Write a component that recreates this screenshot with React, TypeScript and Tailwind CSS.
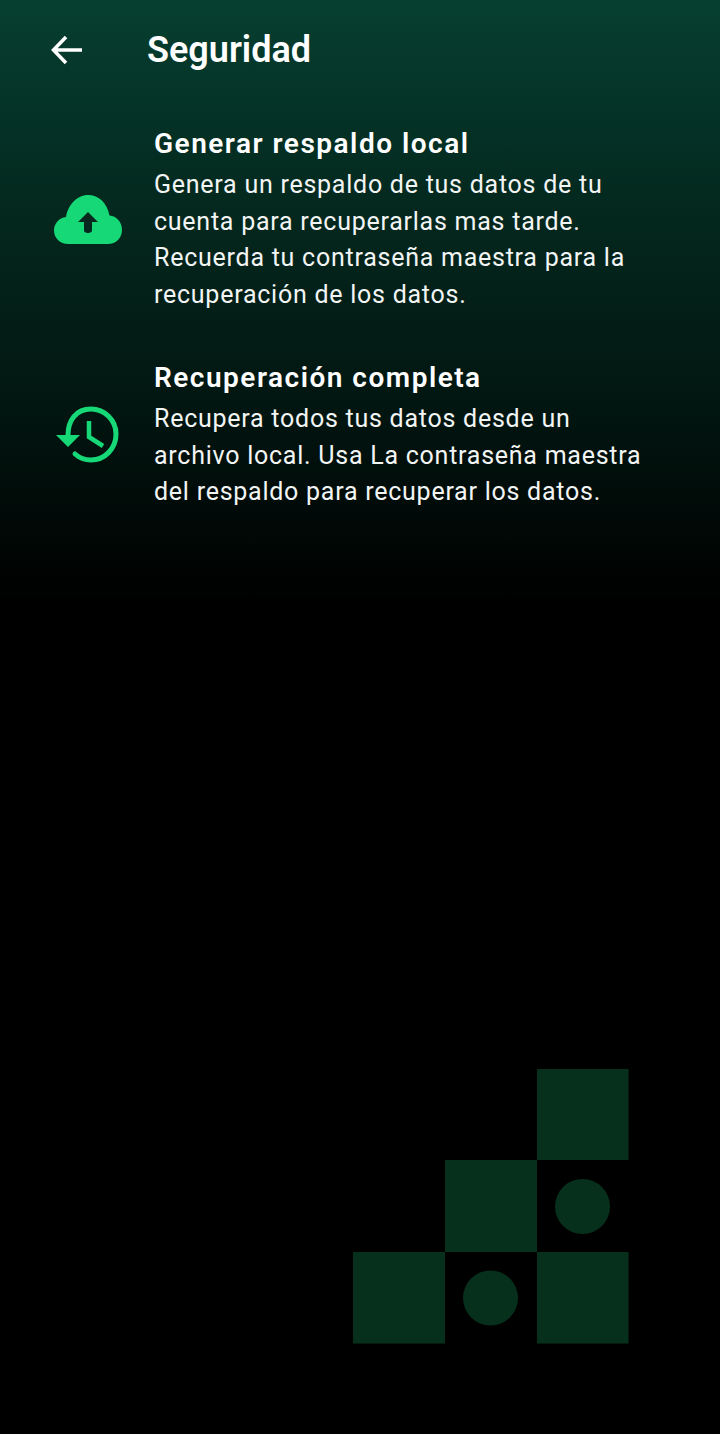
export default function App() {
  const rows = [
    {
      title: "Generar respaldo local",
      lines: ["Genera un respaldo de tus datos de tu", "cuenta para recuperarlas mas tarde.", "Recuerda tu contraseña maestra para la", "recuperación de los datos."],
      icon: (
        <svg viewBox="0 0 68 50" className="w-[68px] h-[50px]">
          <path fill="#16d877" d="M14 49C6 49 0 43 0 35.500C0 28.500 5 23 12 22C14 10 23 0 34 0C45 0 53 8 55.500 20.500C62.500 21 68 27 68 35C68 43 62 49 54 49Z" />
          <path fill="#06281f" d="M34 17L44 27H38V35.500C38 37 36.500 38 34 38C31.500 38 30 37 30 35.500V27H24Z" />
        </svg>
      ),
    },
    {
      title: "Recuperación completa",
      lines: ["Recupera todos tus datos desde un", "archivo local. Usa La contraseña maestra", "del respaldo para recuperar los datos."],
      icon: (
        <svg viewBox="0 0 68 58" className="w-[68px] h-[58px]" fill="none">
          <path stroke="#16d877" strokeWidth="5" d="M14 29C14 14.500 22 3 37 3C50.500 3 62 14 62 28C62 43 50.500 54 37 54C30.500 54 25.500 52 21 48" strokeLinecap="round" />
          <path fill="#16d877" d="M2 29H26L14 41Z" />
          <path stroke="#16d877" strokeWidth="4.500" d="M35 15V31L49 40" />
        </svg>
      ),
    },
  ];

  return (
    <div className="h-[1434px] w-[720px] flex flex-col overflow-hidden bg-[linear-gradient(180deg,#063f30_0%,#04291f_14%,#021510_29%,#000000_42%)] font-['Roboto',sans-serif] text-white">
      <header className="flex items-center h-[100px] pl-[51px] pr-4">
        <svg viewBox="0 0 32 30" className="w-8 h-[30px]" fill="none" stroke="#ffffff" strokeWidth="3.500">
          <path d="M31 15H3M15 2L2.500 15L15 28" />
        </svg>
        <h1 className="ml-[64px] text-[36px] font-semibold leading-[40px]">Seguridad</h1>
      </header>
      <main className="flex flex-col gap-[46px] pt-[26px]">
        {rows.map((r) => (
          <section key={r.title} className="flex items-center">
            <div className="w-[154px] pl-[54px] flex-none flex">{r.icon}</div>
            <div>
              <h2 className="mb-[5px] text-[28px] font-semibold leading-[36px] tracking-[1.500px]">{r.title}</h2>
              {r.lines.map((l) => (
                <p key={l} className="text-[25px] leading-[36.700px] tracking-[0.750px] text-[#f2f5f4]">{l}</p>
              ))}
            </div>
          </section>
        ))}
      </main>
      <svg viewBox="0 0 276 275" className="w-[276px] h-[275px] mt-auto mb-[90px] ml-[353px]" fill="#07301c">
        <rect x="184" y="0" width="91.500" height="91" />
        <rect x="92" y="91" width="92" height="92" />
        <rect x="0" y="183" width="92" height="91.500" />
        <rect x="184" y="183" width="91.500" height="91.500" />
        <circle cx="229.500" cy="137.500" r="27.500" />
        <circle cx="137.500" cy="229" r="27.500" />
      </svg>
    </div>
  );
}
